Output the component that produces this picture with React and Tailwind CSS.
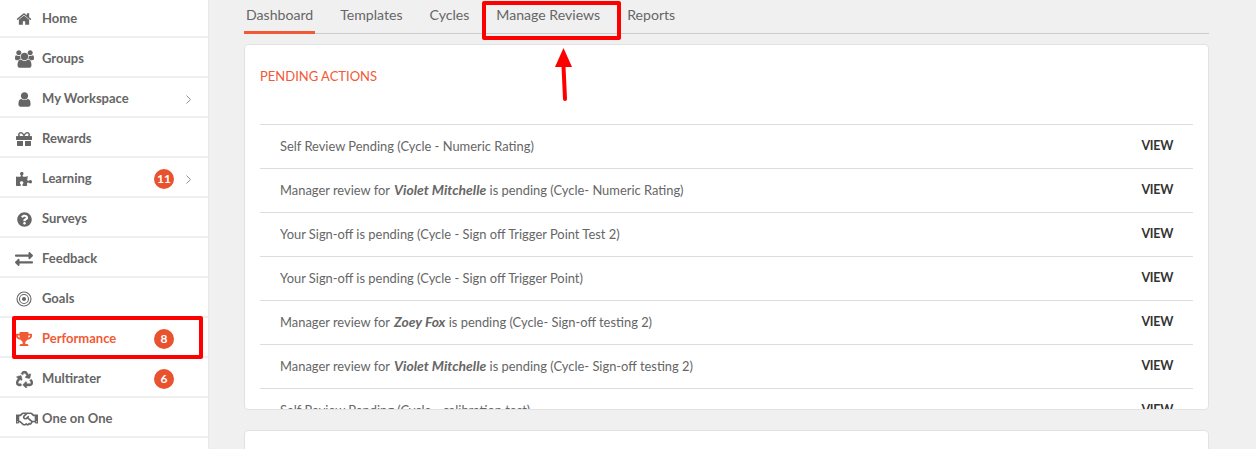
import { FaGift, FaPuzzlePiece, FaQuestionCircle, FaExchangeAlt, FaTrophy, FaRecycle, FaRegHandshake } from "react-icons/fa";

// font awesome 4 shapes, react-icons only has the newer ones
function HomeIcon() {
  return (
    <svg className="w-4 h-4" viewBox="0 0 1792 1792" fill="currentColor">
      <path d="M1472 992v480q0 26-19 45t-45 19h-384v-384h-256v384h-384q-26 0-45-19t-19-45v-480q0-1 .5-3t.5-3l575-474 575 474q1 2 1 6zm223-69l-62 74q-8 9-21 11h-3q-13 0-21-7l-692-577-692 577q-12 8-24 7-13-2-21-11l-62-74q-8-10-7-23.500t11-21.500l719-599q32-26 76-26t76 26l244 204v-195q0-14 9-23t23-9h192q14 0 23 9t9 23v408l219 182q10 8 11 21.500t-7 23.500z" />
    </svg>
  );
}

function UsersIcon() {
  return (
    <svg className="w-[19px] h-[18px]" viewBox="0 0 1920 1792" fill="currentColor">
      <path d="M593 896q-162 5-265 128h-134q-82 0-138-40.500t-56-118.500q0-353 124-353 6 0 43.500 21t97.500 42.500 119 21.500q67 0 133-23-5 37-5 66 0 139 81 256zm1071 637q0 120-73 189.500t-194 69.500h-874q-121 0-194-69.500t-73-189.500q0-53 3.500-103.500t14-109 26.500-108.500 43-97.500 62-81 85.500-53.500 111.500-20q10 0 43 21.500t73 48 107 48 135 21.500 135-21.500 107-48 73-48 43-21.500q61 0 111.500 20t85.500 53.500 62 81 43 97.500 26.500 108.500 14 109 3.500 103.500zm-1024-1277q0 106-75 181t-181 75-181-75-75-181 75-181 181-75 181 75 75 181zm704 384q0 159-112.500 271.500t-271.500 112.500-271.500-112.500-112.500-271.500 112.500-271.500 271.500-112.500 271.500 112.500 112.500 271.500zm576 225q0 78-56 118.500t-138 40.500h-134q-103-123-265-128 81-117 81-256 0-29-5-66 66 23 133 23 59 0 119-21.500t97.500-42.500 43.500-21q124 0 124 353zm-128-609q0 106-75 181t-181 75-181-75-75-181 75-181 181-75 181 75 75 181z" />
    </svg>
  );
}

function UserIcon() {
  return (
    <svg className="w-[17px] h-[17px]" viewBox="0 0 1792 1792" fill="currentColor">
      <path d="M1536 1399q0 109-62.500 187t-150.500 78h-854q-88 0-150.500-78t-62.500-187q0-85 8.500-160.500t31.500-152 58.500-131 94-89 134.500-34.500q131 128 313 128t313-128q76 0 134.500 34.500t94 89 58.500 131 31.500 152 8.500 160.500zm-256-887q0 159-112.500 271.500t-271.500 112.500-271.500-112.500-112.500-271.500 112.500-271.500 271.500-112.500 271.500 112.500 112.500 271.500z" />
    </svg>
  );
}

function GoalsIcon() {
  return (
    <svg className="w-4 h-4" viewBox="0 0 16 16" fill="none" stroke="currentColor">
      <circle cx="8" cy="8" r="7" strokeWidth="1.1" />
      <circle cx="8" cy="8" r="4.5" strokeWidth="1.1" />
      <circle cx="8" cy="8" r="2" fill="currentColor" strokeWidth="0" />
    </svg>
  );
}

const menu = [
  { label: "Home", icon: <HomeIcon /> },
  { label: "Groups", icon: <UsersIcon /> },
  { label: "My Workspace", icon: <UserIcon />, arrow: true },
  { label: "Rewards", icon: <FaGift className="text-[16px]" /> },
  { label: "Learning", icon: <FaPuzzlePiece className="text-[16px]" />, badge: 11, arrow: true },
  { label: "Surveys", icon: <FaQuestionCircle className="text-[15px]" /> },
  { label: "Feedback", icon: <FaExchangeAlt className="text-[18px]" /> },
  { label: "Goals", icon: <GoalsIcon /> },
  { label: "Performance", icon: <FaTrophy className="text-[16px]" />, badge: 8, active: true },
  { label: "Multirater", icon: <FaRecycle className="text-[17px] stroke-[14px]" />, badge: 6 },
  { label: "One on One", icon: <FaRegHandshake className="text-[22px] shrink-0 ml-[5px]" /> },
];

const tabs = ["Dashboard", "Templates", "Cycles", "Manage Reviews", "Reports"];

const actions = [
  { text: "Self Review Pending (Cycle - Numeric Rating)" },
  { before: "Manager review for ", name: "Violet Mitchelle", after: " is pending (Cycle- Numeric Rating)" },
  { text: "Your Sign-off is pending (Cycle - Sign off Trigger Point Test 2)" },
  { text: "Your Sign-off is pending (Cycle - Sign off Trigger Point)" },
  { before: "Manager review for ", name: "Zoey Fox", after: " is pending (Cycle- Sign-off testing 2)" },
  { before: "Manager review for ", name: "Violet Mitchelle", after: " is pending (Cycle- Sign-off testing 2)" },
  { text: "Self Review Pending (Cycle - calibration test)" },
];

function Sidebar() {
  return (
    <aside className="w-[209px] shrink-0 bg-white border-r border-[#e8e8e8] -mt-[2px]">
      {menu.map((item) => (
        <div
          key={item.label}
          className={`h-10 flex items-center pt-[4px] border-b-2 border-[#efefef] text-[13px] font-bold ${item.active ? "text-[#f15a35]" : "text-[#666666]"}`}
        >
          <div className="w-[42px] shrink-0 flex justify-center pl-[6px]">{item.icon}</div>
          <span className="flex-1">{item.label}</span>
          {item.badge && (
            <span className="w-5 h-5 rounded-full bg-[#e8522f] text-white text-[12px] flex items-center justify-center">
              {item.badge}
            </span>
          )}
          <div className="w-[34px] shrink-0 pl-3 flex items-center">
            {item.arrow && (
              <svg className="w-[5px] h-[9px]" viewBox="0 0 5 9" fill="none" stroke="#777777" strokeWidth="0.8">
                <path d="M0.5 0.5 L4.5 4.5 L0.5 8.5" />
              </svg>
            )}
          </div>
        </div>
      ))}
    </aside>
  );
}

function ActionRow({ action }) {
  return (
    <div className="h-11 shrink-0 flex items-center justify-between border-t border-[#dddddd] px-5 text-[12.9px] text-[#666666]">
      <span>
        {action.text || (
          <>
            {action.before}
            <b className="italic text-[13.9px] ml-[1px]">{action.name}</b>
            {action.after}
          </>
        )}
      </span>
      <span className="text-[12.5px] tracking-[-0.3px] font-bold text-[#333333]">VIEW</span>
    </div>
  );
}

export default function App() {
  return (
    <div className="relative h-[449px] overflow-hidden flex bg-[#f0f0f0] font-['Lato',sans-serif]">
      <Sidebar />

      <main className="flex-1 pl-[35px] pr-[47px]">
        {/* TABS */}
        <nav className="h-[34px] flex gap-[23px] border-b border-[#cccccc] text-[14.1px] text-[#666666]">
          {tabs.map((tab, i) => (
            <div
              key={tab}
              className={`px-[2px] pt-[4px] h-[34px] ${i === 0 ? "border-b-[3px] border-[#f15a35]" : ""}`}
            >
              {tab}
            </div>
          ))}
        </nav>

        {/* PENDING ACTIONS */}
        <section className="mt-[10px] h-[366px] overflow-hidden bg-white rounded border border-[#e2e2e2] px-[15px]">
          <h2 className="h-[79px] pt-[22px] text-[13px] text-[#f15a35]">PENDING ACTIONS</h2>
          <div className="flex flex-col">
            {actions.map((action, i) => (
              <ActionRow key={i} action={action} />
            ))}
          </div>
        </section>

        <section className="mt-[20px] h-10 bg-white rounded border border-[#e2e2e2]" />
      </main>

      {/* ANNOTATIONS */}
      <div className="absolute left-[12px] top-[316px] w-[191px] h-[43px] border-[4px] border-[#ff0000] rounded-[2px]" />
      <div className="absolute left-[482px] top-[1px] w-[139px] h-[39px] border-[4px] border-[#ff0000] rounded-[2px]" />
      <svg className="absolute left-[555px] top-[46px]" width="18" height="56" viewBox="0 0 18 56">
        <path d="M8.5 2 L17 21 L0 21 Z" fill="#ff0000" />
        <path d="M8.5 20 L10 53" stroke="#ff0000" strokeWidth="4" strokeLinecap="round" fill="none" />
      </svg>
    </div>
  );
}
